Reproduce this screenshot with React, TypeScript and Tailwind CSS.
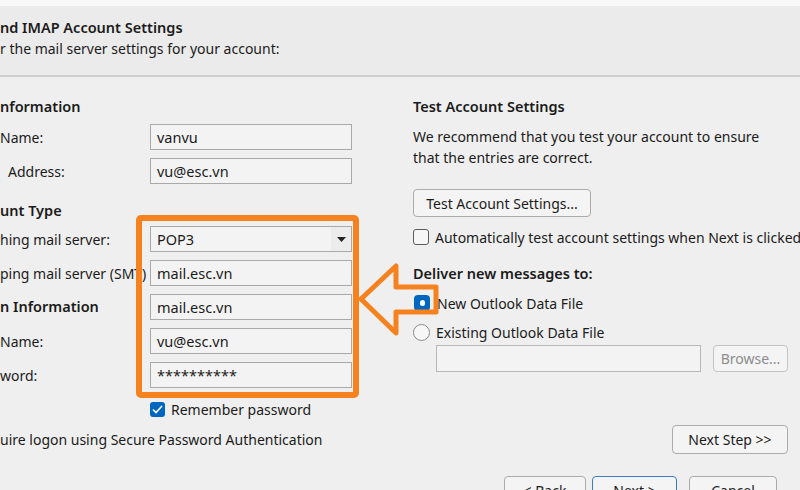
import React from "react";

const font = { fontFamily: '"Noto Sans", "Open Sans", sans-serif' };

function Field({ value, dropdown = false }: { value: string; dropdown?: boolean }) {
  return (
    <div className="w-[202px] h-[26px] border border-[#a9a9a9] bg-[#f3f3f3] flex items-center">
      <span className="flex-1 pl-[6px] text-[14.5px] text-[#1b1b1b] leading-none">{value}</span>
      {dropdown && (
        <span className="w-[20px] h-full bg-[#ececec] flex items-center justify-center">
          <svg width="9" height="5" viewBox="0 0 9 5">
            <path d="M0 0 H9 L4.5 5 Z" fill="#222" />
          </svg>
        </span>
      )}
    </div>
  );
}

function Row({ label, value, bold = false, dropdown = false, indent = false }: {
  label: string;
  value: string;
  bold?: boolean;
  dropdown?: boolean;
  indent?: boolean;
}) {
  return (
    <div className="flex items-center h-[26px]">
      <span
        className={`w-[150px] whitespace-nowrap text-[#1b1b1b] ${bold ? "font-semibold text-[14.5px]" : "text-[14px]"} ${indent ? "pl-[8px]" : ""}`}
      >
        {label}
      </span>
      <Field value={value} dropdown={dropdown} />
    </div>
  );
}

function Btn({ children, className = "" }: { children: React.ReactNode; className?: string }) {
  return (
    <div
      className={`border border-[#ababab] rounded-[4px] bg-[#f4f4f4] flex items-center justify-center text-[14px] text-[#1b1b1b] ${className}`}
    >
      {children}
    </div>
  );
}

export default function App() {
  return (
    <div className="relative w-[800px] h-[490px] overflow-hidden bg-[#efefef] text-[#1b1b1b]" style={font}>
      <div className="h-[6px] bg-[#f8f8f8]" />
      <div className="h-[71px] bg-[#ebebeb] border-b-2 border-[#cfcfcf] pt-[10px]">
        <div className="text-[14.5px] font-semibold leading-[22px] whitespace-nowrap">nd IMAP Account Settings</div>
        <div className="text-[14px] leading-[22px] whitespace-nowrap">r the mail server settings for your account:</div>
      </div>

      <div className="flex h-[395px]">
        {/* left column */}
        <div className="w-[413px] flex flex-col pt-[19px]">
          <div className="h-[20px] leading-[20px] text-[14.5px] font-semibold">nformation</div>
          <div className="mt-[8px] flex flex-col gap-[8px]">
            <Row label="Name:" value="vanvu" />
            <Row label="Address:" value="vu@esc.vn" indent />
          </div>
          <div className="mt-[16px] h-[20px] leading-[20px] text-[14.5px] font-semibold">unt Type</div>
          <div className="mt-[6px] flex flex-col gap-[8px]">
            <Row label="hing mail server:" value="POP3" dropdown />
            <Row label="ping mail server (SMT)" value="mail.esc.vn" />
            <Row label="n Information" value="mail.esc.vn" bold />
            <Row label="Name:" value="vu@esc.vn" />
            <Row label="word:" value="**********" />
          </div>
          <div className="mt-[11px] h-[20px] flex items-center pl-[150px] gap-[6px]">
            <span className="w-[15px] h-[15px] rounded-[3px] bg-[#0067c0] flex items-center justify-center">
              <svg width="11" height="9" viewBox="0 0 11 9">
                <path d="M1 4.5 L4 7.5 L10 1" stroke="#fff" strokeWidth="1.6" fill="none" />
              </svg>
            </span>
            <span className="text-[14px]">Remember password</span>
          </div>
          <div className="mt-[11px] h-[20px] leading-[20px] text-[14px] whitespace-nowrap">
            uire logon using Secure Password Authentication
          </div>
        </div>

        {/* right column */}
        <div className="w-[375px] flex flex-col pt-[19px]">
          <div className="h-[20px] leading-[20px] text-[14.5px] font-semibold">Test Account Settings</div>
          <div className="mt-[10px] text-[14px] leading-[21px]">
            We recommend that you test your account to ensure
            <br />
            that the entries are correct.
          </div>
          <Btn className="mt-[21px] w-[178px] h-[28px]">Test Account Settings...</Btn>
          <div className="mt-[10px] h-[20px] flex items-center gap-[6px] whitespace-nowrap">
            <span className="w-[16px] h-[16px] shrink-0 rounded-[3px] border border-[#5c5c5c] bg-[#f6f6f6]" />
            <span className="text-[14px]">Automatically test account settings when Next is clicked</span>
          </div>
          <div className="mt-[16px] h-[20px] leading-[20px] text-[14.5px] font-semibold">Deliver new messages to:</div>
          <div className="mt-[10px] h-[20px] flex items-center gap-[7px]">
            <span className="ml-[1px] w-[16px] h-[16px] rounded-[4px] bg-[#0067c0] flex items-center justify-center">
              <span className="w-[5px] h-[6px] rounded-full bg-white" />
            </span>
            <span className="text-[14px]">New Outlook Data File</span>
          </div>
          <div className="mt-[9px] h-[20px] flex items-center gap-[6px]">
            <span className="w-[17px] h-[17px] rounded-full border border-[#8a8a8a] bg-[#f7f7f7]" />
            <span className="text-[14px]">Existing Outlook Data File</span>
          </div>
          <div className="mt-[3px] flex items-center pl-[23px]">
            <div className="w-[265px] h-[27px] border border-[#b8b8b8] bg-[#f3f3f3]" />
            <Btn className="ml-[12px] w-[75px] h-[27px] !text-[#8c8c8c] !border-[#c4c4c4]">Browse...</Btn>
          </div>
          <div className="mt-[53px] flex justify-end">
            <Btn className="w-[116px] h-[29px]">Next Step &gt;&gt;</Btn>
          </div>
        </div>
      </div>

      <div className="mt-[4px] flex justify-end pr-[23px]">
        <Btn className="w-[82px] h-[28px] items-start pt-[3px]">&lt; Back</Btn>
        <Btn className="ml-[6px] w-[85px] h-[28px] items-start pt-[3px] !border-[#3d7bc6]">Next &gt;</Btn>
        <Btn className="ml-[12px] w-[88px] h-[28px] items-start pt-[3px]">Cancel</Btn>
      </div>

      {/* highlight overlay */}
      <div className="absolute left-[136px] top-[215px] w-[223px] h-[183px] border-[6px] border-[#f5821f] rounded-[5px]" />
      <svg className="absolute left-0 top-0" width="800" height="490" viewBox="0 0 800 490">
        <path
          d="M361 299 L396 266 L396 287 L436 287 L436 312 L396 312 L396 333 Z"
          fill="none"
          stroke="#f5821f"
          strokeWidth="5"
          strokeLinejoin="round"
        />
      </svg>
    </div>
  );
}
